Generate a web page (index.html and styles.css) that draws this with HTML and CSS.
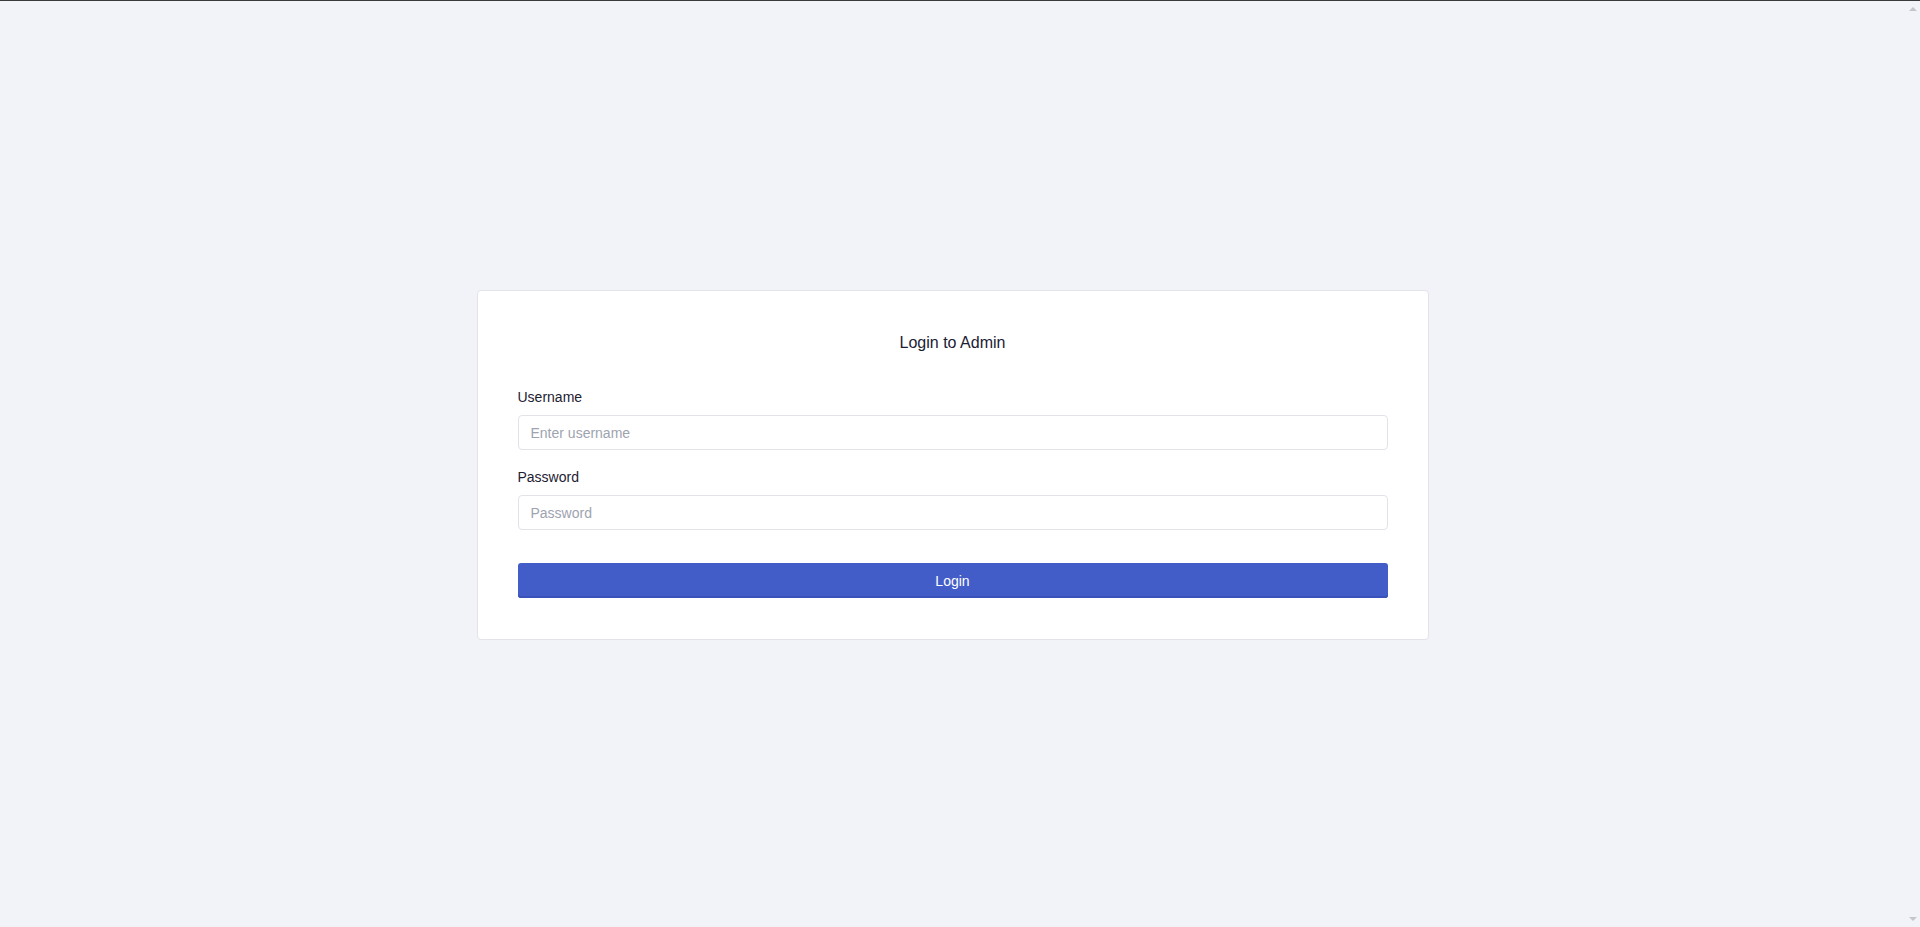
FILE: index.html
```html
<!DOCTYPE html>
<html lang="en">
<head>
<meta charset="utf-8">
<title>Login to Admin</title>
<link rel="stylesheet" href="styles.css">
</head>
<body>
<main class="page">
  <form class="card" onsubmit="return false;">
    <h1 class="card-title">Login to Admin</h1>
    <div class="field">
      <label class="field-label" for="username">Username</label>
      <input class="field-input" id="username" type="text" placeholder="Enter username">
    </div>
    <div class="field">
      <label class="field-label" for="password">Password</label>
      <input class="field-input" id="password" type="password" placeholder="Password">
    </div>
    <button class="btn-login" type="submit">Login</button>
  </form>
</main>
<div class="scrollbar" aria-hidden="true">
  <span class="arrow arrow-up"></span>
  <span class="arrow arrow-down"></span>
</div>
</body>
</html>
```

FILE: styles.css
```css
html {
  background: #f2f3f8;
}

body {
  margin: 0;
  border-top: 1px solid #3a3a3c;
  font-family: "Liberation Sans", Arial, sans-serif;
  font-size: 14px;
  line-height: 1.5;
  color: #212529;
  background: #f2f3f8;
  overflow: hidden;
}

.page {
  box-sizing: border-box;
  min-height: 926px;
  padding: 2px 15px 0 0;
  display: flex;
  align-items: center;
  justify-content: center;
}

.card {
  box-sizing: border-box;
  width: 952px;
  padding: 40px 40px 41px;
  background: #ffffff;
  border: 1px solid #e2e4ea;
  border-radius: 4px;
  display: flex;
  flex-direction: column;
}

.card-title {
  margin: 0 0 32px;
  font-size: 16px;
  font-weight: 400;
  line-height: 24px;
  text-align: center;
  color: #1b2034;
}

.field {
  display: flex;
  flex-direction: column;
  gap: 7px;
  margin-bottom: 17px;
}

.field + .field {
  margin-bottom: 33px;
}

.field-label {
  font-size: 14px;
  line-height: 21px;
  color: #1d2131;
}

.field-input {
  box-sizing: border-box;
  height: 35px;
  padding: 6px 12px;
  font-family: "Liberation Sans", Arial, sans-serif;
  font-size: 14px;
  line-height: 21px;
  color: #212529;
  background: #ffffff;
  border: 1px solid #e1e3e8;
  border-radius: 4px;
  outline: none;
}

.field-input::placeholder {
  color: #9ea3b0;
}

.btn-login {
  box-sizing: border-box;
  height: 35px;
  padding: 1px 0 0;
  font-family: "Liberation Sans", Arial, sans-serif;
  font-size: 14px;
  line-height: 20px;
  color: #ffffff;
  background: #425cc8;
  border: none;
  box-shadow: inset 0 -2px 0 #3a51b9;
  border-radius: 3px;
  cursor: pointer;
}

.scrollbar {
  position: fixed;
  top: 1px;
  right: 0;
  bottom: 0;
  width: 15px;
  display: flex;
  flex-direction: column;
  justify-content: space-between;
  align-items: center;
  padding: 6px 0;
  box-sizing: border-box;
}

.arrow {
  width: 0;
  height: 0;
  border-left: 4px solid transparent;
  border-right: 4px solid transparent;
}

.arrow-up {
  border-bottom: 4px solid #c4c6cc;
}

.arrow-down {
  border-top: 4px solid #c4c6cc;
}
```
